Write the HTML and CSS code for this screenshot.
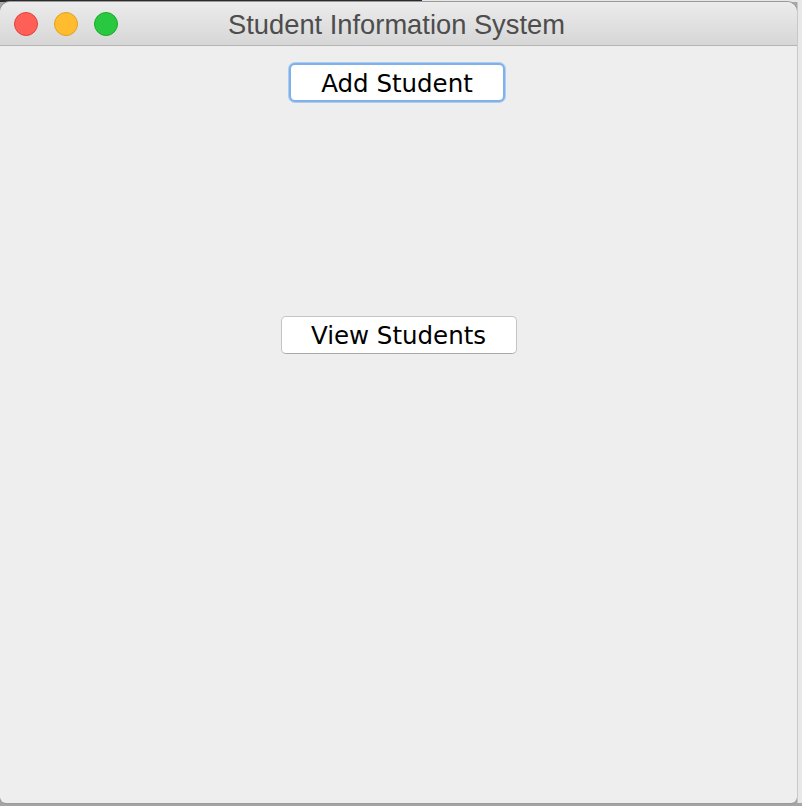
FILE: index.html
```html
<!DOCTYPE html>
<html>
<head>
<meta charset="utf-8">
<link rel="stylesheet" href="styles.css">
<title>Student Information System</title>
</head>
<body>
<div class="desk-top"><div class="desk-dark"></div><div class="desk-light"></div></div>
<div class="stage">
  <div class="window">
    <div class="titlebar">
      <div class="lights">
        <span class="light red"></span>
        <span class="light yellow"></span>
        <span class="light green"></span>
      </div>
      <div class="title">Student Information System</div>
    </div>
    <div class="content">
      <button class="btn focused">Add Student</button>
      <button class="btn second">View Students</button>
    </div>
  </div>
  <div class="desk-right"></div>
</div>
<div class="desk-bottom"></div>
</body>
</html>
```

FILE: styles.css
```css
html, body {
  margin: 0;
  padding: 0;
}
body {
  width: 802px;
  height: 806px;
  overflow: hidden;
  background: #a8a8a8;
  font-family: "DejaVu Sans", "Liberation Sans", sans-serif;
}
.desk-top {
  display: flex;
  height: 2px;
}
.desk-dark {
  width: 422px;
  background: #2b2b2b;
}
.desk-light {
  flex: 1;
  background: #e6e6e6;
}
.stage {
  display: flex;
  height: 801px;
}
.window {
  width: 797px;
  height: 801px;
  background: #eeeeee;
  border-radius: 10px 10px 6px 6px;
  overflow: hidden;
  box-shadow: 0 0 0 1px #9a9a9a;
  display: flex;
  flex-direction: column;
}
.desk-right {
  flex: 1;
  background: #e8e8e8;
  border-left: 1px solid #c8c8c8;
}
.desk-bottom {
  height: 3px;
  background: #a4a4a4;
}
.titlebar {
  height: 43px;
  background: linear-gradient(#ececec, #d6d6d6);
  border-bottom: 1px solid #b4b4b4;
  display: flex;
  align-items: center;
  position: relative;
}
.lights {
  display: flex;
  gap: 16px;
  padding-left: 14px;
  padding-top: 1px;
}
.light {
  width: 24px;
  height: 24px;
  border-radius: 50%;
  box-sizing: border-box;
}
.red { background: #fe5f57; border: 1px solid #e0443e; }
.yellow { background: #febc2e; border: 1px solid #dea123; }
.green { background: #28c840; border: 1px solid #1aab29; }
.title {
  position: absolute;
  left: 0;
  right: 0;
  top: 0;
  bottom: 0;
  display: flex;
  align-items: center;
  justify-content: center;
  font-family: "Liberation Sans", Arial, sans-serif;
  font-size: 27.3px;
  color: #4d4d4d;
  padding-top: 3px;
  padding-right: 4px;
}
.content {
  flex: 1;
  display: flex;
  flex-direction: column;
  align-items: center;
  padding-top: 17px;
}
.btn {
  font-family: "DejaVu Sans", "Liberation Sans", sans-serif;
  font-size: 24.5px;
  color: #000;
  background: #ffffff;
  border: 1px solid #c4c4c4;
  border-bottom-color: #a9a9a9;
  border-radius: 5px;
  height: 38px;
  padding: 2px 0 0 0;
  box-sizing: border-box;
  line-height: 34px;
  margin: 0;
}
.focused {
  width: 216px;
  height: 39px;
  margin-right: 3px;
  border: 2px solid #7fb0ea;
  box-shadow: 0 0 0 1px #aecdf3;
  border-radius: 6px;
}
.second {
  width: 236px;
  margin-top: 214px;
}
```
